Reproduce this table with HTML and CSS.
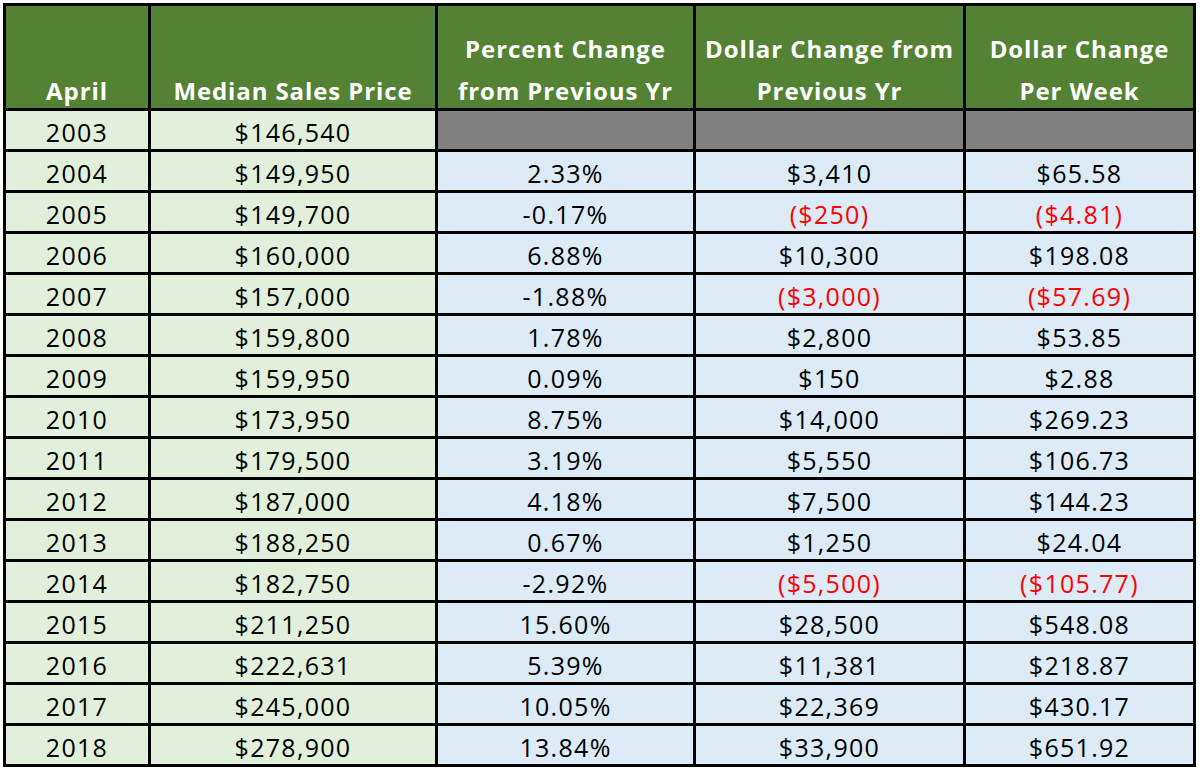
FILE: index.html
```html
<!DOCTYPE html>
<html>
<head>
<meta charset="utf-8">
<link rel="stylesheet" href="styles.css">
</head>
<body>
<div class="sheet" role="table">
  <div class="h"><span>April</span></div>
  <div class="h"><span>Median Sales Price</span></div>
  <div class="h"><span>Percent Change<br>from Previous Yr</span></div>
  <div class="h"><span>Dollar Change from<br>Previous Yr</span></div>
  <div class="h"><span>Dollar Change<br>Per Week</span></div>

  <div class="c g">2003</div><div class="c g">$146,540</div><div class="c x"></div><div class="c x"></div><div class="c x"></div>
  <div class="c g">2004</div><div class="c g">$149,950</div><div class="c b">2.33%</div><div class="c b">$3,410</div><div class="c b">$65.58</div>
  <div class="c g">2005</div><div class="c g">$149,700</div><div class="c b">-0.17%</div><div class="c b neg">($250)</div><div class="c b neg">($4.81)</div>
  <div class="c g">2006</div><div class="c g">$160,000</div><div class="c b">6.88%</div><div class="c b">$10,300</div><div class="c b">$198.08</div>
  <div class="c g">2007</div><div class="c g">$157,000</div><div class="c b">-1.88%</div><div class="c b neg">($3,000)</div><div class="c b neg">($57.69)</div>
  <div class="c g">2008</div><div class="c g">$159,800</div><div class="c b">1.78%</div><div class="c b">$2,800</div><div class="c b">$53.85</div>
  <div class="c g">2009</div><div class="c g">$159,950</div><div class="c b">0.09%</div><div class="c b">$150</div><div class="c b">$2.88</div>
  <div class="c g">2010</div><div class="c g">$173,950</div><div class="c b">8.75%</div><div class="c b">$14,000</div><div class="c b">$269.23</div>
  <div class="c g">2011</div><div class="c g">$179,500</div><div class="c b">3.19%</div><div class="c b">$5,550</div><div class="c b">$106.73</div>
  <div class="c g">2012</div><div class="c g">$187,000</div><div class="c b">4.18%</div><div class="c b">$7,500</div><div class="c b">$144.23</div>
  <div class="c g">2013</div><div class="c g">$188,250</div><div class="c b">0.67%</div><div class="c b">$1,250</div><div class="c b">$24.04</div>
  <div class="c g">2014</div><div class="c g">$182,750</div><div class="c b">-2.92%</div><div class="c b neg">($5,500)</div><div class="c b neg">($105.77)</div>
  <div class="c g">2015</div><div class="c g">$211,250</div><div class="c b">15.60%</div><div class="c b">$28,500</div><div class="c b">$548.08</div>
  <div class="c g">2016</div><div class="c g">$222,631</div><div class="c b">5.39%</div><div class="c b">$11,381</div><div class="c b">$218.87</div>
  <div class="c g">2017</div><div class="c g">$245,000</div><div class="c b">10.05%</div><div class="c b">$22,369</div><div class="c b">$430.17</div>
  <div class="c g">2018</div><div class="c g">$278,900</div><div class="c b">13.84%</div><div class="c b">$33,900</div><div class="c b">$651.92</div>
</div>
</body>
</html>
```
FILE: styles.css
```css
html, body {
  margin: 0;
  padding: 0;
  background: #ffffff;
}
body {
  padding: 3px 0 0 3px;
  font-family: "Open Sans", "Noto Sans", sans-serif;
}
.sheet {
  display: grid;
  grid-template-columns: 145px 287px 258px 270px 230px;
  grid-template-rows: 105px repeat(16, 41px);
  width: 1193px;
  box-sizing: border-box;
  border-left: 3px solid #000;
  border-top: 3px solid #000;
}
.h, .c {
  box-sizing: border-box;
  border-right: 3px solid #000;
  border-bottom: 3px solid #000;
  display: flex;
  align-items: flex-end;
  justify-content: center;
  text-align: center;
  overflow: visible;
}
.h {
  background: #548235;
  color: #ffffff;
  font-weight: 700;
  font-size: 24px;
  letter-spacing: 0.9px;
}
.h span {
  line-height: 42px;
  margin-bottom: -4px;
}
.c {
  font-size: 25px;
  letter-spacing: 1.3px;
  color: #000;
  line-height: 34px;
}
.g { background: #e2efda; }
.b { background: #ddebf7; }
.x { background: #808080; }
.neg { color: #ff0000; }
```
